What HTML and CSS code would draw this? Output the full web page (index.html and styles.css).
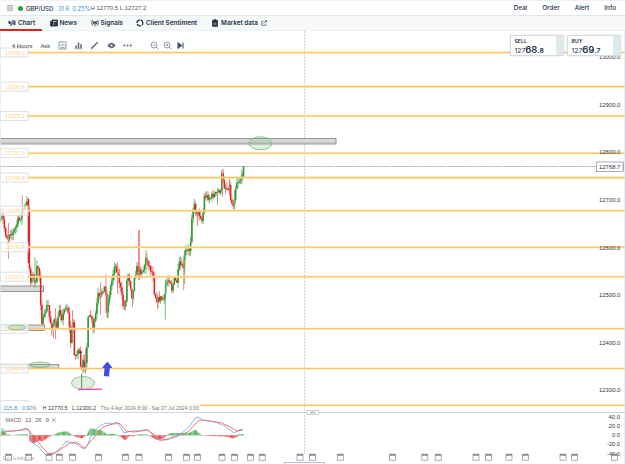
FILE: index.html
```html
<!DOCTYPE html>
<html lang="en">
<head>
<meta charset="utf-8">
<title>GBP/USD</title>
<link rel="stylesheet" href="styles.css">
</head>
<body>
<main class="window">
  <header class="titlebar">
    <svg class="menu" viewBox="0 0 6 6"><path d="M0 .8H6M0 3H6M0 5.2H6"/></svg>
    <i class="dot"></i>
    <b class="market">GBP/USD</b>
    <span class="change">31.6&nbsp; 0.25%</span>
    <span class="range">H 12770.5 L 12727.2</span>
    <nav class="actions"><span>Deal</span><span>Order</span><span>Alert</span><span>Info</span></nav>
  </header>
  <nav class="tabs">
    <div class="tab t-chart"><svg viewBox="0 0 8 8"><path d="M1.3 2V5M3 3V7M5 1V5.5M6.8 1.5V6" stroke-width="1.2"/><path d="M.3 3H3M5 5H7"/></svg>Chart</div>
    <div class="tab t-news"><svg viewBox="0 0 8 8"><path d="M.5 2.5H2V7H.5ZM2 1H7.5V7H1.5Z" fill="#26324a"/><path d="M3 2.6H6.5M3 5H4.5" stroke="#fff"/></svg>News</div>
    <div class="tab t-signals"><svg viewBox="0 0 8 8"><path d="M1.5 1Q-.3 3.7 1.5 6.5M6.5 1Q8.3 3.7 6.5 6.5M2.8 2Q1.7 3.7 2.8 5.3M5.2 2Q6.3 3.7 5.2 5.3M4 3.5V7.5"/><circle cx="4" cy="3.5" r=".8" fill="#26324a"/></svg>Signals</div>
    <div class="tab t-client"><svg viewBox="0 0 8 8"><path d="M4.6 1A3 3 0 0 1 6 6M5.2 6.7A3 3 0 0 1 1.2 5M1 4A3 3 0 0 1 3.6 1" stroke-width="1.3"/></svg>Client Sentiment</div>
    <div class="tab t-data"><svg viewBox="0 0 8 8"><path d="M1.5 1.2H6.5V7.3H1.5Z" fill="#26324a"/><path d="M3 1H5" stroke-width="1.5"/><path d="M3 5.7V4.2M4 5.7V3.3M5 5.7V4.5" stroke="#fff" stroke-width=".5"/></svg>Market data<svg class="ext" viewBox="0 0 6 6"><path d="M2.5 1.3H.8V5.3H4.8V3.5M2.5 3.5L5.3.7M3.6.6H5.4V2.4"/></svg></div>
  </nav>
  <section class="chart">
    <svg id="plot" class="plot" viewBox="0 31 625 433"></svg>
    <div class="tools">
      <span class="period">4 Hours</span><span class="ask">Ask</span>
      <svg class="tool" viewBox="0 0 9 9"><path d="M1 1H8V8H1ZM2.5 6.7H6.7M3 5V3.5M4.6 5V2.5M6.2 5V3.8"/></svg>
      <svg class="tool" viewBox="0 0 9 9"><path d="M.6 7.8H8.4" /><path d="M2 7V4.5M4.5 7V1.5M7 7V3.3" stroke-width="1.5"/></svg>
      <svg class="tool" viewBox="0 0 9 9"><path d="M1.2 7.8L7.7 1.3" stroke-width="1.3"/></svg>
      <svg class="tool" viewBox="0 0 9 9"><path d="M.7 4.5Q4.5-.4 8.3 4.5Q4.5 9.4.7 4.5Z" fill="#59657b"/><circle cx="4.5" cy="4.5" r="1.3" fill="#fff"/></svg>
      <svg class="tool dots" viewBox="0 0 9 9"><circle cx="1.3" cy="4.5" r="1"/><circle cx="4.5" cy="4.5" r="1"/><circle cx="7.7" cy="4.5" r="1"/></svg>
      <svg class="tool zoomout" viewBox="0 0 9 9"><circle cx="4" cy="4" r="3"/><path d="M6.2 6.2L8.3 8.3M2.6 4H5.4"/></svg>
      <svg class="tool zoomin" viewBox="0 0 9 9"><circle cx="4" cy="4" r="3"/><path d="M6.2 6.2L8.3 8.3M2.6 4H5.4M4 2.6V5.4"/></svg>
      <svg class="tool last" viewBox="0 0 9 9"><path d="M2 1.5L6.3 4.5L2 7.5Z" fill="#45516a"/><path d="M2 1.5V7.5M7 1.5V7.5" stroke-width="1.2"/></svg>
    </div>
    <div class="quotes">
      <div class="quote"><b>SELL</b><span>127<strong>68</strong><em>.8</em></span></div>
      <div class="quote"><b>BUY</b><span>127<strong>69</strong><em>.7</em></span></div>
    </div>
  </section>
</main>
<script src="chart.js"></script>
</body>
</html>
```
FILE: styles.css
```css
* { box-sizing: border-box; }
body { margin: 0; background: #fff; font-family: Inter, "Liberation Sans", sans-serif; color: #26324a; overflow: hidden; }
.window { width: 625px; height: 464px; display: flex; flex-direction: column; }
svg { display: block; flex: none; fill: none; stroke: #26324a; stroke-width: .8; }
.titlebar { height: 15px; display: flex; align-items: center; border-top: 1px solid #edf1f5; padding: 0 9px 0 7px; font-size: 6px; white-space: nowrap; }
.menu { width: 6px; height: 6px; stroke: #59606e; stroke-width: .7; }
.dot { width: 5px; height: 5px; border-radius: 50%; background: #2aa12a; margin: 0 3px 0 5px; }
.market { width: 32px; font-size: 6.2px; font-weight: 500; letter-spacing: -.1px; }
.change { width: 32.5px; color: #3d91d0; letter-spacing: -.1px; }
.range { color: #4c5563; font-family: "Liberation Sans", sans-serif; }
.actions { margin-left: auto; display: flex; gap: 15px; font-size: 6.4px; font-weight: 500; }
.tabs { height: 16px; display: flex; background: #f7f9f9; border-top: 1px solid #e3e6e8; border-bottom: 1px solid #eef1f2; font-size: 6.4px; font-weight: 600; white-space: nowrap; }
.tab { display: flex; align-items: center; gap: 2px; height: 14px; }
.tab svg { width: 8px; height: 8px; }
.tab .ext { width: 6px; height: 6px; margin-left: 1px; stroke-width: .6; }
.t-chart { width: 42px; height: 15px; padding-left: 8px; border-bottom: 2px solid #e32121; padding-top: 1px; }
.t-news { width: 48.5px; padding-left: 7.5px; }
.t-signals { width: 45.5px; }
.t-client { width: 75px; }
.chart { position: relative; height: 433px; }
.plot { width: 625px; height: 433px; stroke: none; }
.plot text { font-family: "Liberation Sans", sans-serif; }
.tools { position: absolute; left: 12px; top: 9.5px; height: 9px; display: flex; align-items: center; color: #363e4c; font-family: "Liberation Sans", sans-serif; font-size: 5.8px; white-space: nowrap; }
.period { width: 28.5px; padding-top: 2px; }
.ask { width: 17px; padding-top: 2px; }
.tool { width: 9px; height: 9px; margin-right: 7.4px; stroke: #59657b; stroke-width: .65; }
.dots { fill: #59657b; stroke: none; margin-right: 17.5px; }
.zoomout, .zoomin { margin-right: 4px; }
.quotes { position: absolute; left: 510px; top: 4px; display: flex; gap: 3px; }
.quote { width: 54px; height: 21px; background: #fff; border: 1px solid #d5dadd; border-right: 8px solid #dfe9eb; border-radius: 2px; padding: 2px 0 0 3.5px; display: flex; flex-direction: column; box-shadow: 0 0 1px #9ba6ad; white-space: nowrap; }
.quote b { font-size: 5.2px; line-height: 6px; font-weight: 600; }
.quote span { font-size: 6.8px; line-height: 10px; height: 10px; margin-top: .5px; }
.quote strong { font-size: 9.5px; font-weight: 600; }
.quote em { font-size: 6.8px; font-style: normal; font-weight: 600; }
```
FILE: chart.js
```javascript
const plot = document.getElementById('plot');
const NS = 'http://www.w3.org/2000/svg';
function add(tag, attrs, text) {
  const el = document.createElementNS(NS, tag);
  for (const k in attrs) el.setAttribute(k, attrs[k]);
  if (text !== undefined) el.textContent = text;
  plot.appendChild(el);
}
const line = (x1, y1, x2, y2, stroke, w, extra) => add('line', { x1, y1, x2, y2, stroke, 'stroke-width': w, ...extra });
const rect = (x, y, width, height, fill, extra) => add('rect', { x, y, width, height, fill, ...extra });
const label = (x, y, str, len, fill, size) => add('text', { x, y, fill, 'font-size': size, textLength: len, lengthAdjust: 'spacingAndGlyphs' }, str);

// Reading cursor and last price
line(304.5, 31, 304.5, 454, '#bfc2c8', .8, { 'stroke-dasharray': '2 1.2' });
line(0, 166.5, 597, 166.5, '#a2a4bb', .9, { 'stroke-dasharray': '2 .8' });

// Supply and demand zones
[[0, 138.5, 336, 5.5], [0, 286, 43.5, 5.5], [0, 325, 44.5, 5.5], [0, 364.5, 58.7, 3.5]].forEach(z =>
  rect(...z, '#d9d9db', { stroke: '#8c8c8e', 'stroke-width': .9 }));
line(0, 142.7, 336, 142.7, '#b4b4b4', .6);

// Candles: close levels along the time axis
const path = [[0,222],[2,214],[4,226],[6,235],[8,239],[10,230],[12,235],[14,230],[16,227],[18,220],[20,220],[22,210],[26,206],[28,199],[28.7,262],[30.5,280],[32.5,274],[34,278],[35.5,286],[37,267],[39,268],[41.5,322],[44,318],[46,308],[48,305],[49.5,318],[52,328],[54,320],[57,328],[59.5,308],[62,318],[66,305],[68,310],[70.5,343],[73,320],[74.5,356],[76.5,356],[78,348],[80,356],[81,376],[83,362],[85,367],[87,345],[88,320],[91,315],[93,330],[96,312],[98,295],[100,300],[102,290],[105,287],[107,312],[109,295],[112,280],[114.5,264],[117,270],[120,285],[123,305],[125,308],[127.5,272],[130,282],[132.5,301],[134,277],[137,268],[139,272],[143,270],[146,258],[150,268],[153,274],[154.5,294],[157,300],[161,298],[164,301],[165.5,285],[168,280],[170,278],[172,290],[174,280],[177,282],[179,264],[183,268],[185,252],[189.5,250],[191,236],[192,212],[194,205],[196,211],[198,214],[200,214],[202.5,223],[204,197],[206,196],[210,198],[213,195],[216,194],[219,190],[221,193],[222,172],[224.5,187],[227,188],[229.5,186],[231,203],[233.5,204],[235.5,188],[236.5,182],[240,180],[242.5,177],[243.7,167]];
let seed = 7;
const rnd = () => (seed = (seed * 16807) % 2147483647) / 2147483647;
const at = x => {
  for (let i = 1; i < path.length; i++) {
    const [a, b] = path[i - 1], [c, d] = path[i];
    if (x <= c) return b + (d - b) * (x - a) / (c - a);
  }
  return 167;
};
let prev = 221;
for (let x = .6; x < 244; x += 1.25) {
  const close = at(x) + (x > 242 ? 0 : (rnd() - .5) * 6), up = close < prev;
  const top = Math.min(prev, close), bottom = Math.max(prev, close);
  line(x, top - rnd() * 6, x, bottom + rnd() * 6, up ? '#62b765' : '#ef7376', .9);
  rect(x - .7, top, 1.5, Math.max(1, bottom - top), up ? '#27962c' : '#df2323');
  prev = close;
}
[[8.5,223,259,0],[22.3,195,218,0],[35,257,288,1],[53.5,325,338,0],[55.5,308,339,0],[72.5,310,339,0],[85.5,348,374,0],[100.5,282,315,0],[106,274,313,0],[107.5,296,318,1],[117.5,262,294,0],[124.5,300,310,0],[132.5,290,307,0],[146,250,274,1],[157.5,297,309,0],[165.3,280,319.5,1],[183.7,260,290,0],[184.7,250,284,1],[197.5,210,226,0],[217.5,189,205,1],[222.5,171,197,0],[229.5,178,195,0],[234.5,190,210,1]].forEach(w =>
  line(w[0], w[1], w[0], w[2], w[3] ? '#66b868' : '#ef797c', .9));
line(139, 230, 139, 280, '#ee6568', 1.5);
line(28.5, 199, 28.5, 263, '#df2323', 1.6);
line(243.7, 166, 243.7, 178, '#27962c', 1.2);
line(81.7, 374, 81.7, 389, '#388b3b', 1);
rect(79, 351.7, 3, 1.2, '#263554');
add('path', { d: 'M84 360L86 363L85 366L87 370', stroke: '#699aa8', 'stroke-width': .9, fill: 'none' });

// Horizontal levels
const levels = [[52.5,'13008.2'],[86.6,'12936.6'],[116,'12875.1'],[153.2,'12797.0'],[177.6,'12745.8'],[210.7,'12676.2'],[247.3,'12599.6'],[276.7,'12537.6'],[328.8,'12428.4'],[368.5,'12344.9'],[405.2,'12267.7']];
levels.forEach(([y, t]) => {
  line(28, y, 625, y, '#ffe0a2', 2);
  line(28, y, 625, y, '#ffc45c', 1.1);
  rect(.5, y - 4.5, 27.5, 9, '#ffffff', { 'fill-opacity': .7, stroke: '#dedfe2', 'stroke-width': 1 });
  label(5, y + 2, t, 19.8, '#ffd48a', 5.7);
});

// Highlights
[[260.4,143.3,11.5,6.5],[17,327.5,9,2.2],[40,364.8,10.5,2.6],[83,383,11.5,6.5]].forEach(([cx, cy, rx, ry]) =>
  add('ellipse', { cx, cy, rx, ry, fill: '#80bd82', 'fill-opacity': .25, stroke: '#78b97b', 'stroke-width': .8 }));
line(78, 389.6, 102, 389.2, '#ef43b0', 1.2);
add('path', { d: 'M107.5 361.5L112.5 368L109.8 368L109 376.5L103.8 376L104.6 368L102 367.5Z', fill: '#414bea' });

// Price axis
for (let i = 0; i < 8; i++) label(599, 59 + i * 47.63, (13000 - i * 100).toFixed(1), 21.4, '#30343c', 5.9);
rect(596.5, 162, 26.5, 9.5, '#fff', { stroke: '#a9acba', 'stroke-width': 1 });
line(623.5, 162, 623.5, 171, '#a9acba', 1);
label(599, 169, '12768.7', 21.4, '#30343c', 5.9);

// Range summary
rect(1, 403, 199, 8.5, '#ffffff', { 'fill-opacity': .85 });
label(3.5, 409.8, '115.8', 13.5, '#3d8bcb', 5.9);
label(22, 409.8, '0.92%', 14.5, '#3d8bcb', 5.9);
label(42.5, 409.8, 'H 12770.5', 25, '#353c49', 5.9);
label(72, 409.8, 'L 12300.2', 24, '#353c49', 5.9);
label(100.5, 409.8, 'Thu 4 Apr 2024 8:00 - Sat 27 Jul 2024 0:00', 98.5, '#737883', 5.7);

// MACD
line(0, 412.5, 625, 412.5, '#ccced1', .9);
rect(307, 410.3, 11.5, 4, '#fff', { stroke: '#b2b5bb', 'stroke-width': .7 });
rect(310, 411.7, 5.5, 1.6, '#b2b5bb');
const bars = [[0,-3],[1.5,-5],[4,-4],[6,-1],[12,0],[18,-.7],[28,-1],[28.5,5],[32,8],[35,7],[39,5],[42,6],[46,3],[50,.5],[54,-.7],[59,-3],[66,-4],[72,0],[77,2],[81,3],[86,0],[87,-2],[90,-7],[96,-5.5],[101,-5],[106,-1],[113,-1.5],[118,0],[122,3],[125,5],[128,1],[131,.3],[133,1],[138,-1],[148,-.5],[152,2],[156,4.5],[161,4],[165,1],[169,-2],[180,-2.3],[188,-2],[195,-5.5],[201,0],[208,.4],[225,1],[233,3],[237,1],[238,-1],[243,-1]];
for (let x = .5; x < 244; x += 1.2) {
  let i = 1;
  while (i < bars.length - 1 && bars[i][0] < x) i++;
  const [a, b] = bars[i - 1], [c, d] = bars[i];
  const h = b + (d - b) * (x - a) / (c - a);
  rect(x, Math.min(435.2, 435.2 + h), 1.1, Math.abs(h) + .25, h < 0 ? '#58b45d' : '#e94b4e');
}
add('polyline', { fill: 'none', stroke: '#7ab1e8', 'stroke-width': .9, points: '0,430 3,428.5 6,431 14,431 20,430 26,428 29,430 31,438 34,444 38,446 42,451 46,455 54,453.5 60,448 67,441 72,443 77,444 80,447 85,449 88,444 90,438 95,430 100,425.5 106,423 112,424 117,422 121,428 124,433 132,431 138,431 147,429.5 153,435 160,441 168,439 175,436 182,433 190,426 195,418 198,417 203,420 215,422 225,426 230,430 234,433 239,430 243,429' });
add('polyline', { fill: 'none', stroke: '#ef6669', 'stroke-width': .9, points: '0,437 5,432 12,431 28,429.5 35,438 42,447 48,453.5 55,453 64,447 70,443 76,442 85,448 90,442 97,434 103,427 112,424 120,423.5 126,431 134,432 148,430 158,438 166,440 175,437 188,432 195,424 200,420 210,421 222,423 230,427 237,431 243,430' });
label(5.5, 422, 'MACD', 16, '#60646c', 5.6);
label(25, 422, '12', 6.5, '#60646c', 5.8);
label(35, 422, '26', 6.7, '#60646c', 5.8);
label(45.5, 422, '9', 3.5, '#60646c', 5.8);
add('path', { d: 'M52.2 418.3L55.5 421.8M55.5 418.3L52.2 421.8', stroke: '#777b84', 'stroke-width': .7 });
['40.0', '20.0', '0.0', '-20.0', '-40.0'].forEach((t, i) => {
  const w = [11.5, 11.5, 8, 13, 13][i];
  label(620 - w, 419 + i * 9.15, t, w, '#30343c', 5.8);
});

// Calendar events
label(3, 460.3, 'Data is indicative', 31, '#a6a8ad', 4.5);
[8.5,28.5,49,59.3,72.3,98.5,125.5,139,168.5,186.5,197.5,222,234.5,250.5,262.2,300,312.5,340.3,392.6,424.8,438.2,476,488.5,509,525.5,563,574.7,614.5].forEach(x => {
  rect(x - 3, 454.6, 6, 5.6, '#ffffff', { 'fill-opacity': .4, stroke: '#8c8a98', 'stroke-width': .7 });
  rect(x - 3, 454, 6, 1.8, '#918f9c');
  line(x - 1.6, 453.3, x - 1.6, 454.8, '#77747f', .7);
  line(x + 1.6, 453.3, x + 1.6, 454.8, '#77747f', .7);
});
rect(284.5, 462.5, 40, 4, '#fff', { stroke: '#b8bac8', 'stroke-width': .9 });
line(.4, 31, .4, 464, '#e7e9ec', .8);
line(624.6, 31, 624.6, 464, '#e4e8f0', .8);
```
